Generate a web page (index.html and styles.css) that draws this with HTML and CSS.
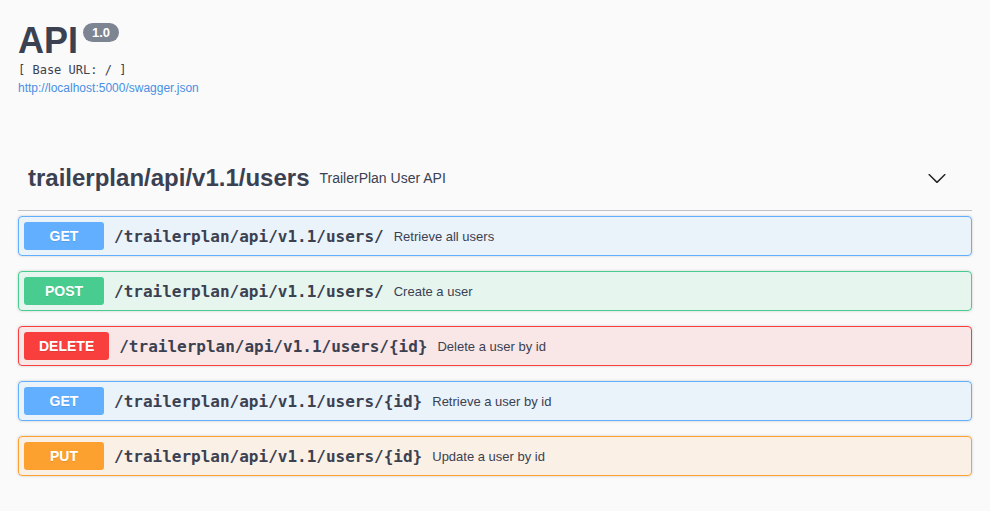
FILE: index.html
```html
<!DOCTYPE html>
<html>
<head>
<meta charset="utf-8">
<link rel="stylesheet" href="styles.css">
</head>
<body>
<div class="wrapper">
  <div class="info">
    <h2 class="title"><span>API</span><span class="version">1.0</span></h2>
    <pre class="base-url">[ Base URL: / ]</pre>
    <a class="link" href="#">http://localhost:5000/swagger.json</a>
  </div>

  <div class="tag-section">
    <h4 class="tag">
      <span class="tag-name">trailerplan/api/v1.1/users</span>
      <small class="tag-desc">TrailerPlan User API</small>
      <span class="expand">
        <svg width="20" height="20" viewBox="0 0 20 20"><path d="M17.418 6.109c.272-.268.709-.268.979 0s.271.701 0 .969l-7.908 7.83c-.27.268-.707.268-.979 0l-7.908-7.830c-.27-.268-.27-.701 0-.969.271-.268.709-.268.979 0L10 13.25l7.418-7.141z"/></svg>
      </span>
    </h4>

    <div class="opblock get">
      <span class="method">GET</span>
      <span class="path">/trailerplan/api/v1.1/users/</span>
      <span class="desc">Retrieve all users</span>
    </div>
    <div class="opblock post">
      <span class="method">POST</span>
      <span class="path">/trailerplan/api/v1.1/users/</span>
      <span class="desc">Create a user</span>
    </div>
    <div class="opblock delete">
      <span class="method">DELETE</span>
      <span class="path">/trailerplan/api/v1.1/users/{id}</span>
      <span class="desc">Delete a user by id</span>
    </div>
    <div class="opblock get">
      <span class="method">GET</span>
      <span class="path">/trailerplan/api/v1.1/users/{id}</span>
      <span class="desc">Retrieve a user by id</span>
    </div>
    <div class="opblock put">
      <span class="method">PUT</span>
      <span class="path">/trailerplan/api/v1.1/users/{id}</span>
      <span class="desc">Update a user by id</span>
    </div>
  </div>
</div>
</body>
</html>
```
FILE: styles.css
```css
html, body {
  margin: 0;
  padding: 0;
  background: #fafafa;
}
body {
  font-family: "Liberation Sans", Arial, sans-serif;
  color: #3b4151;
}
.wrapper {
  padding: 0 18px;
}
.info {
  display: flex;
  flex-direction: column;
  align-items: flex-start;
  padding-top: 20px;
  margin-bottom: 51px;
}
.title {
  display: flex;
  align-items: flex-start;
  margin: 0;
  font-size: 36px;
  font-weight: bold;
  color: #3b4151;
  line-height: 41px;
}
.version {
  margin: 3px 0 0 5px;
  background: #7d8492;
  color: #fff;
  font-size: 13px;
  line-height: 15px;
  padding: 2px 9px 1.5px;
  border-radius: 10px;
}
.base-url {
  margin: 2px 0 0;
  font-family: "DejaVu Sans Mono", monospace;
  font-size: 12px;
  line-height: 14px;
  color: #3b4151;
}
.link {
  margin-top: 4px;
  font-size: 12px;
  line-height: 14px;
  color: #4990e2;
  text-decoration: none;
}
.tag {
  display: flex;
  align-items: center;
  min-height: 44px;
  margin: 0 0 5px;
  padding: 10px 25px 10px 10px;
  border-bottom: 1px solid rgba(59, 65, 81, 0.3);
  font-weight: normal;
}
.tag-name {
  font-size: 24px;
  font-weight: bold;
  color: #3b4151;
}
.tag-desc {
  flex: 1;
  padding: 0 10px;
  font-size: 14px;
  color: #3b4151;
}
.expand {
  display: flex;
  width: 20px;
  height: 20px;
}
.expand svg {
  fill: #222;
}
.opblock {
  display: flex;
  align-items: center;
  margin: 0 0 15px;
  padding: 5px;
  border: 1px solid #000;
  border-radius: 4px;
  box-shadow: 0 0 3px rgba(0, 0, 0, 0.19);
}
.method {
  min-width: 80px;
  box-sizing: border-box;
  padding: 6px 15px;
  border-radius: 3px;
  font-size: 14px;
  font-weight: bold;
  line-height: 16px;
  text-align: center;
  color: #fff;
  text-shadow: 0 1px 0 rgba(0, 0, 0, 0.1);
}
.path {
  padding: 0 10px;
  font-family: "DejaVu Sans Mono", monospace;
  font-size: 16px;
  font-weight: bold;
  color: #3b4151;
}
.desc {
  flex: 1;
  font-size: 13px;
  color: #3b4151;
}
.get { border-color: #61affe; background: rgba(97, 175, 254, 0.1); }
.get .method { background: #61affe; }
.post { border-color: #49cc90; background: rgba(73, 204, 144, 0.1); }
.post .method { background: #49cc90; }
.delete { border-color: #f93e3e; background: rgba(249, 62, 62, 0.1); }
.delete .method { background: #f93e3e; }
.put { border-color: #fca130; background: rgba(252, 161, 48, 0.1); }
.put .method { background: #fca130; }
```
